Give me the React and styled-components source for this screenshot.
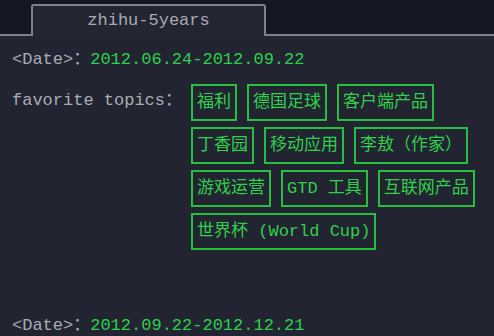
import React from "react";
import styled, { createGlobalStyle } from "styled-components";

const TOPICS = [
  "福利",
  "德国足球",
  "客户端产品",
  "丁香园",
  "移动应用",
  "李敖（作家）",
  "游戏运营",
  "GTD 工具",
  "互联网产品",
  "世界杯 (World Cup)",
];

const GlobalStyle = createGlobalStyle`
  html, body {
    margin: 0;
    padding: 0;
    background: #222432;
  }
  body {
    font-family: "Liberation Mono", "Noto Sans CJK SC", monospace;
    font-size: 17px;
  }
`;

const App = () => {
  return (
    <Wrap>
      <GlobalStyle />
      <TabBar>
        <TabEdge $width="31px" />
        <Tab>zhihu-5years</Tab>
        <TabEdge />
      </TabBar>
      <Content>
        <DateLine>
          <Label>&lt;Date&gt;：</Label>
          <Green>2012.06.24-2012.09.22</Green>
        </DateLine>
        <TopicRow>
          <TopicLabel>favorite topics：</TopicLabel>
          <TagList>
            {TOPICS.map((topic) => (
              <Tag key={topic}>{topic}</Tag>
            ))}
          </TagList>
        </TopicRow>
        <DateLine $top="66px">
          <Label>&lt;Date&gt;：</Label>
          <Green>2012.09.22-2012.12.21</Green>
        </DateLine>
      </Content>
    </Wrap>
  );
};

export default App;

const Wrap = styled.div`
  width: 494px;
  height: 336px;
  overflow: hidden;
  background: #222432;
`;

const TabBar = styled.div`
  display: flex;
  align-items: flex-end;
  height: 36px;
  background: #151724;
`;

const TabEdge = styled.div`
  flex: ${(p) => (p.$width ? `0 0 ${p.$width}` : "1")};
  height: 0;
  border-bottom: 2px solid #7e818b;
`;

const Tab = styled.div`
  box-sizing: border-box;
  width: 235px;
  height: 32px;
  border: 2px solid #7e818b;
  border-bottom: none;
  border-radius: 3px 3px 0 0;
  background: #232533;
  color: #a7aab1;
  text-align: center;
  line-height: 30px;
`;

const Content = styled.div`
  padding: 14px 8px 0 12px;
`;

const DateLine = styled.div`
  display: flex;
  line-height: 20px;
  margin-top: ${(p) => p.$top || "0"};
`;

const Label = styled.span`
  color: #a9acb3;
  white-space: pre;
`;

const Green = styled.span`
  color: #2ad14a;
`;

const TopicRow = styled.div`
  display: flex;
  align-items: flex-start;
  margin-top: 14px;
`;

const TopicLabel = styled.div`
  color: #a9acb3;
  line-height: 34px;
  white-space: pre;
  margin-right: 9px;
`;

const TagList = styled.div`
  flex: 1;
  display: flex;
  flex-wrap: wrap;
  gap: 6px 10px;
`;

const Tag = styled.div`
  box-sizing: border-box;
  height: 37px;
  padding: 0 4px;
  border: 2px solid #25bf3d;
  color: #2fd04a;
  line-height: 33px;
  white-space: pre;
`;
